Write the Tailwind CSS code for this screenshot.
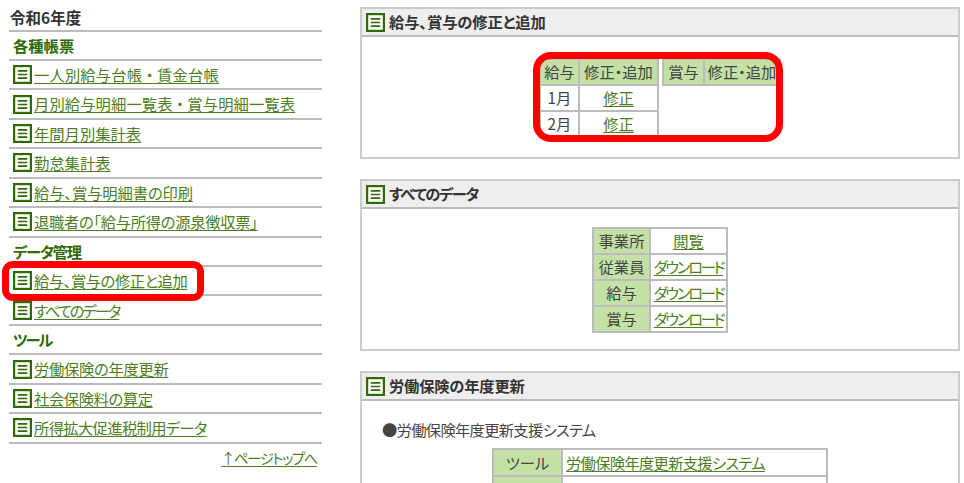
<!DOCTYPE html>
<html lang="ja"><head><meta charset="utf-8"><script src="https://cdn.jsdelivr.net/npm/@tailwindcss/browser@4"></script></head>
<body class="bg-white overflow-hidden">
<div class="relative w-[964px] h-[483px] overflow-hidden flex font-['Noto_Sans_CJK_JP','Noto_Sans',sans-serif] [font-feature-settings:'palt'] text-[#444] text-[15.3px] leading-none">
  <aside class="w-[313px] ml-[9px] shrink-0 flex flex-col">
    <div class="h-[31.5px] pt-[5px] flex items-center border-b-2 border-[#bbb] px-[1px] font-bold text-[#333] text-[15.5px]">令和6年度</div>
    <div class="h-[29.45px] flex items-center border-b-2 border-[#bbb] px-[4px] font-bold text-[#2f6a05]">各種帳票</div>
    <a class="h-[29.45px] flex items-center gap-[2px] border-b-2 border-[#bbb] pl-[4px] text-[#4d7f22]"><svg class="w-[19px] h-[19px] shrink-0" viewBox="0 0 18 18"><rect x="1" y="1" width="16" height="16" fill="#fff" stroke="#2f6a05" stroke-width="2.2"/><path d="M4.5 5.5h9M4.5 9h9M4.5 12.5h9" stroke="#2f6a05" stroke-width="1.6"/></svg><span class="underline underline-offset-2 tracking-[0.15px]">一人別給与台帳 ・ 賃金台帳</span></a>
    <a class="h-[29.45px] flex items-center gap-[2px] border-b-2 border-[#bbb] pl-[4px] text-[#4d7f22]"><svg class="w-[19px] h-[19px] shrink-0" viewBox="0 0 18 18"><rect x="1" y="1" width="16" height="16" fill="#fff" stroke="#2f6a05" stroke-width="2.2"/><path d="M4.5 5.5h9M4.5 9h9M4.5 12.5h9" stroke="#2f6a05" stroke-width="1.6"/></svg><span class="underline underline-offset-2 tracking-[0.1px]">月別給与明細一覧表 ・ 賞与明細一覧表</span></a>
    <a class="h-[29.45px] flex items-center gap-[2px] border-b-2 border-[#bbb] pl-[4px] text-[#4d7f22]"><svg class="w-[19px] h-[19px] shrink-0" viewBox="0 0 18 18"><rect x="1" y="1" width="16" height="16" fill="#fff" stroke="#2f6a05" stroke-width="2.2"/><path d="M4.5 5.5h9M4.5 9h9M4.5 12.5h9" stroke="#2f6a05" stroke-width="1.6"/></svg><span class="underline underline-offset-2">年間月別集計表</span></a>
    <a class="h-[29.45px] flex items-center gap-[2px] border-b-2 border-[#bbb] pl-[4px] text-[#4d7f22]"><svg class="w-[19px] h-[19px] shrink-0" viewBox="0 0 18 18"><rect x="1" y="1" width="16" height="16" fill="#fff" stroke="#2f6a05" stroke-width="2.2"/><path d="M4.5 5.5h9M4.5 9h9M4.5 12.5h9" stroke="#2f6a05" stroke-width="1.6"/></svg><span class="underline underline-offset-2">勤怠集計表</span></a>
    <a class="h-[29.45px] flex items-center gap-[2px] border-b-2 border-[#bbb] pl-[4px] text-[#4d7f22]"><svg class="w-[19px] h-[19px] shrink-0" viewBox="0 0 18 18"><rect x="1" y="1" width="16" height="16" fill="#fff" stroke="#2f6a05" stroke-width="2.2"/><path d="M4.5 5.5h9M4.5 9h9M4.5 12.5h9" stroke="#2f6a05" stroke-width="1.6"/></svg><span class="underline underline-offset-2 tracking-[-0.1px]">給与、賞与明細書の印刷</span></a>
    <a class="h-[29.45px] flex items-center gap-[2px] border-b-2 border-[#bbb] pl-[4px] text-[#4d7f22]"><svg class="w-[19px] h-[19px] shrink-0" viewBox="0 0 18 18"><rect x="1" y="1" width="16" height="16" fill="#fff" stroke="#2f6a05" stroke-width="2.2"/><path d="M4.5 5.5h9M4.5 9h9M4.5 12.5h9" stroke="#2f6a05" stroke-width="1.6"/></svg><span class="underline underline-offset-2 tracking-[-0.3px]">退職者の「給与所得の源泉徴収票」</span></a>
    <div class="h-[29.45px] flex items-center border-b-2 border-[#bbb] px-[4px] font-bold text-[#2f6a05] tracking-[-1.2px]">データ管理</div>
    <a class="h-[29.45px] flex items-center gap-[2px] border-b-2 border-[#bbb] pl-[4px] text-[#4d7f22]"><svg class="w-[19px] h-[19px] shrink-0" viewBox="0 0 18 18"><rect x="1" y="1" width="16" height="16" fill="#fff" stroke="#2f6a05" stroke-width="2.2"/><path d="M4.5 5.5h9M4.5 9h9M4.5 12.5h9" stroke="#2f6a05" stroke-width="1.6"/></svg><span class="underline underline-offset-2 tracking-[-0.45px]">給与、賞与の修正と追加</span></a>
    <a class="h-[29.45px] flex items-center gap-[2px] border-b-2 border-[#bbb] pl-[4px] text-[#4d7f22]"><svg class="w-[19px] h-[19px] shrink-0" viewBox="0 0 18 18"><rect x="1" y="1" width="16" height="16" fill="#fff" stroke="#2f6a05" stroke-width="2.2"/><path d="M4.5 5.5h9M4.5 9h9M4.5 12.5h9" stroke="#2f6a05" stroke-width="1.6"/></svg><span class="underline underline-offset-2 tracking-[-2px]">すべてのデータ</span></a>
    <div class="h-[29.45px] flex items-center border-b-2 border-[#bbb] px-[4px] font-bold text-[#2f6a05] tracking-[-2px]">ツール</div>
    <a class="h-[29.45px] flex items-center gap-[2px] border-b-2 border-[#bbb] pl-[4px] text-[#4d7f22]"><svg class="w-[19px] h-[19px] shrink-0" viewBox="0 0 18 18"><rect x="1" y="1" width="16" height="16" fill="#fff" stroke="#2f6a05" stroke-width="2.2"/><path d="M4.5 5.5h9M4.5 9h9M4.5 12.5h9" stroke="#2f6a05" stroke-width="1.6"/></svg><span class="underline underline-offset-2 tracking-[-0.3px]">労働保険の年度更新</span></a>
    <a class="h-[29.45px] flex items-center gap-[2px] border-b-2 border-[#bbb] pl-[4px] text-[#4d7f22]"><svg class="w-[19px] h-[19px] shrink-0" viewBox="0 0 18 18"><rect x="1" y="1" width="16" height="16" fill="#fff" stroke="#2f6a05" stroke-width="2.2"/><path d="M4.5 5.5h9M4.5 9h9M4.5 12.5h9" stroke="#2f6a05" stroke-width="1.6"/></svg><span class="underline underline-offset-2 tracking-[-0.4px]">社会保険料の算定</span></a>
    <a class="h-[29.45px] flex items-center gap-[2px] border-b-2 border-[#bbb] pl-[4px] text-[#4d7f22]"><svg class="w-[19px] h-[19px] shrink-0" viewBox="0 0 18 18"><rect x="1" y="1" width="16" height="16" fill="#fff" stroke="#2f6a05" stroke-width="2.2"/><path d="M4.5 5.5h9M4.5 9h9M4.5 12.5h9" stroke="#2f6a05" stroke-width="1.6"/></svg><span class="underline underline-offset-2 tracking-[-0.65px]">所得拡大促進税制用データ</span></a>
    <div class="text-right pr-[5px] pt-[7px] text-[#4d7f22] text-[14.5px]"><a class="underline underline-offset-2 tracking-[-1.5px]">↑ページトップへ</a></div>
  </aside>
  <main class="ml-[38px] w-[600px] shrink-0 flex flex-col gap-[20px] pt-[7px]">
    <section class="h-[152px] border-2 border-[#ccc] shrink-0">
      <h2 class="h-[28px] bg-[#eee] border-b-2 border-[#bbb] flex items-center gap-[4px] pl-[4px] font-bold text-[#333]"><svg class="w-[19px] h-[19px] shrink-0" viewBox="0 0 18 18"><rect x="1" y="1" width="16" height="16" fill="#fff" stroke="#2f6a05" stroke-width="2.2"/><path d="M4.5 5.5h9M4.5 9h9M4.5 12.5h9" stroke="#2f6a05" stroke-width="1.6"/></svg><span class="tracking-[-0.1px]">給与、賞与の修正と追加</span></h2>
      <div class="flex justify-center items-start gap-[3px] pt-[21px]">
        <table class="border-collapse table-fixed w-[120px] text-center whitespace-nowrap">
          <tr class="h-[26px] bg-[#c3e0a5]"><th class="font-normal border-2 border-[#bbb] w-[39px]">給与</th><th class="font-normal border-2 border-[#bbb]">修正・追加</th></tr>
          <tr class="h-[26px]"><td class="border-2 border-[#bbb]">1月</td><td class="border-2 border-[#bbb]"><a class="underline underline-offset-2 text-[#4d7f22]">修正</a></td></tr>
          <tr class="h-[26px]"><td class="border-2 border-[#bbb]">2月</td><td class="border-2 border-[#bbb]"><a class="underline underline-offset-2 text-[#4d7f22]">修正</a></td></tr>
        </table>
        <table class="border-collapse table-fixed w-[119px] text-center whitespace-nowrap">
          <tr class="h-[26px] bg-[#c3e0a5]"><th class="font-normal border-2 border-[#bbb] w-[41px]">賞与</th><th class="font-normal border-2 border-[#bbb]">修正・追加</th></tr>
        </table>
      </div>
    </section>
    <section class="h-[172px] border-2 border-[#ccc] shrink-0">
      <h2 class="h-[28px] bg-[#eee] border-b-2 border-[#bbb] flex items-center gap-[4px] pl-[4px] font-bold text-[#333]"><svg class="w-[19px] h-[19px] shrink-0" viewBox="0 0 18 18"><rect x="1" y="1" width="16" height="16" fill="#fff" stroke="#2f6a05" stroke-width="2.2"/><path d="M4.5 5.5h9M4.5 9h9M4.5 12.5h9" stroke="#2f6a05" stroke-width="1.6"/></svg><span class="tracking-[-1.4px]">すべてのデータ</span></h2>
      <div class="flex justify-center pt-[18px]">
        <table class="border-collapse table-fixed w-[136px] text-center whitespace-nowrap">
          <tr class="h-[26px]"><th class="font-normal bg-[#c3e0a5] border-2 border-[#bbb] w-[57px]">事業所</th><td class="border-2 border-[#bbb]"><a class="underline underline-offset-2 text-[#4d7f22]">閲覧</a></td></tr>
          <tr class="h-[26px]"><th class="font-normal bg-[#c3e0a5] border-2 border-[#bbb]">従業員</th><td class="border-2 border-[#bbb]"><a class="underline underline-offset-2 text-[#4d7f22] tracking-[-2.3px]">ダウンロード</a></td></tr>
          <tr class="h-[26px]"><th class="font-normal bg-[#c3e0a5] border-2 border-[#bbb]">給与</th><td class="border-2 border-[#bbb]"><a class="underline underline-offset-2 text-[#4d7f22] tracking-[-2.3px]">ダウンロード</a></td></tr>
          <tr class="h-[26px]"><th class="font-normal bg-[#c3e0a5] border-2 border-[#bbb]">賞与</th><td class="border-2 border-[#bbb]"><a class="underline underline-offset-2 text-[#4d7f22] tracking-[-2.3px]">ダウンロード</a></td></tr>
        </table>
      </div>
    </section>
    <section class="h-[200px] border-2 border-[#ccc] shrink-0">
      <h2 class="h-[28px] bg-[#eee] border-b-2 border-[#bbb] flex items-center gap-[4px] pl-[4px] font-bold text-[#333]"><svg class="w-[19px] h-[19px] shrink-0" viewBox="0 0 18 18"><rect x="1" y="1" width="16" height="16" fill="#fff" stroke="#2f6a05" stroke-width="2.2"/><path d="M4.5 5.5h9M4.5 9h9M4.5 12.5h9" stroke="#2f6a05" stroke-width="1.6"/></svg><span class="tracking-[-0.2px]">労働保険の年度更新</span></h2>
      <p class="pt-[21px] pl-[20px] tracking-[-0.7px]">●労働保険年度更新支援システム</p>
      <div class="flex justify-center pt-[11px]">
        <table class="border-collapse table-fixed w-[336px] text-center whitespace-nowrap">
          <tr class="h-[27px]"><th class="font-normal bg-[#c3e0a5] border-2 border-[#bbb] w-[69px]">ツール</th><td class="border-2 border-[#bbb] text-left pl-[3px]"><a class="underline underline-offset-2 text-[#4d7f22] tracking-[-0.7px]">労働保険年度更新支援システム</a></td></tr>
          <tr class="h-[27px]"><th class="font-normal bg-[#c3e0a5] border-2 border-[#bbb]">マニュアル</th><td class="border-2 border-[#bbb] text-left pl-[3px]"><a class="underline underline-offset-2 text-[#4d7f22]">労働保険年度更新支援ツール</a></td></tr>
        </table>
      </div>
    </section>
  </main>
  <div class="absolute left-[2px] top-[261px] w-[202px] h-[40px] border-[7px] border-[#f00] rounded-[11px]"></div>
  <div class="absolute left-[533px] top-[52px] w-[250px] h-[90px] border-[7px] border-[#f00] rounded-[18px]"></div>
</div>
</body></html>
